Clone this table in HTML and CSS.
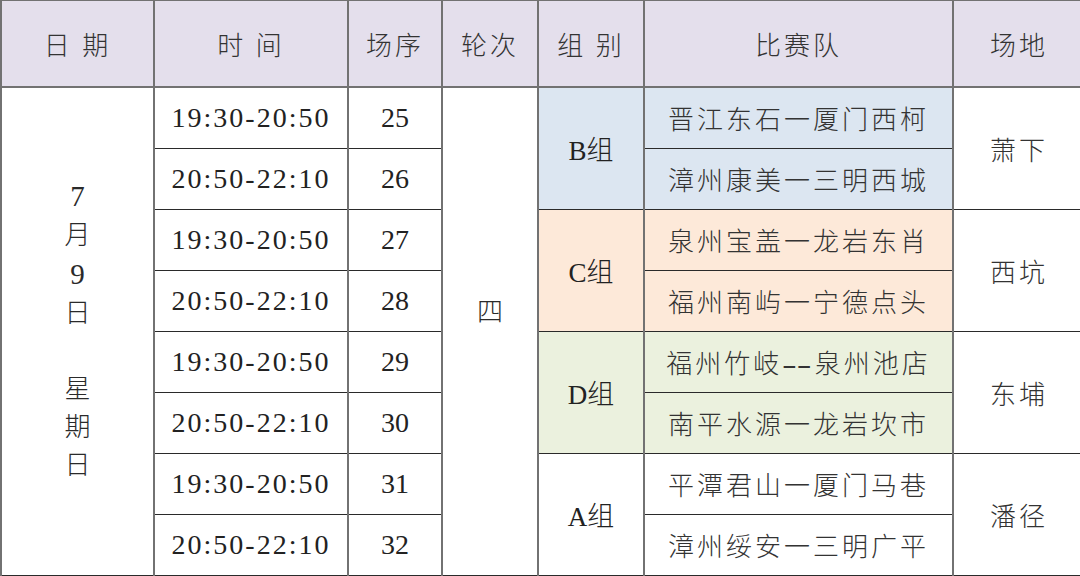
FILE: index.html
```html
<!DOCTYPE html>
<html lang="zh">
<head>
<meta charset="utf-8">
<title>赛程表</title>
<link rel="stylesheet" href="styles.css">
</head>
<body>
<table class="sched">
  <colgroup>
    <col class="c-date"><col class="c-time"><col class="c-seq"><col class="c-round"><col class="c-grp"><col class="c-team"><col class="c-venue">
  </colgroup>
  <thead>
    <tr class="head">
      <th>日 期</th><th>时 间</th><th>场序</th><th>轮次</th><th>组 别</th><th>比赛队</th><th>场地</th>
    </tr>
  </thead>
  <tbody>
    <tr>
      <td class="date" rowspan="8"><span class="dn">7</span><br>月<br><span class="dn">9</span><br>日<br><br>星<br>期<br>日</td>
      <td class="time">19:30-20:50</td>
      <td class="num">25</td>
      <td class="round" rowspan="8">四</td>
      <td class="grp b" rowspan="2">B组</td>
      <td class="team b">晋江东石一厦门西柯</td>
      <td class="venue" rowspan="2">萧下</td>
    </tr>
    <tr>
      <td class="time">20:50-22:10</td>
      <td class="num">26</td>
      <td class="team b">漳州康美一三明西城</td>
    </tr>
    <tr>
      <td class="time">19:30-20:50</td>
      <td class="num">27</td>
      <td class="grp c" rowspan="2">C组</td>
      <td class="team c">泉州宝盖一龙岩东肖</td>
      <td class="venue" rowspan="2">西坑</td>
    </tr>
    <tr>
      <td class="time">20:50-22:10</td>
      <td class="num">28</td>
      <td class="team c">福州南屿一宁德点头</td>
    </tr>
    <tr>
      <td class="time">19:30-20:50</td>
      <td class="num">29</td>
      <td class="grp d" rowspan="2">D组</td>
      <td class="team d">福州竹岐<span class="dash">--</span>泉州池店</td>
      <td class="venue" rowspan="2">东埔</td>
    </tr>
    <tr>
      <td class="time">20:50-22:10</td>
      <td class="num">30</td>
      <td class="team d">南平水源一龙岩坎市</td>
    </tr>
    <tr>
      <td class="time">19:30-20:50</td>
      <td class="num">31</td>
      <td class="grp" rowspan="2">A组</td>
      <td class="team">平潭君山一厦门马巷</td>
      <td class="venue" rowspan="2">潘径</td>
    </tr>
    <tr>
      <td class="time">20:50-22:10</td>
      <td class="num">32</td>
      <td class="team">漳州绥安一三明广平</td>
    </tr>
  </tbody>
</table>
</body>
</html>
```
FILE: styles.css
```css
html, body {
  margin: 0;
  padding: 0;
  background: #ffffff;
  overflow: hidden;
}
body {
  width: 1080px;
  height: 576px;
}
.sched {
  border-collapse: collapse;
  table-layout: fixed;
  width: 1084px;
  margin-top: -1px;
  font-family: "Liberation Serif", "Noto Sans CJK SC", serif;
  color: #222222;
  font-size: 26px;
  font-weight: 300;
}
.c-date { width: 153px; }
.c-time { width: 194px; }
.c-seq { width: 94px; }
.c-round { width: 96px; }
.c-grp { width: 106px; }
.c-team { width: 309px; }
.c-venue { width: 132px; }

.sched th,
.sched td {
  padding: 0;
  text-align: center;
  vertical-align: middle;
  border-top: 1px solid #2a2a2a;
  border-bottom: 1px solid #2a2a2a;
  border-left: 2px solid #727272;
  border-right: 2px solid #727272;
  font-weight: 300;
}
.head {
  height: 87px;
}
.sched th {
  background: #e4dfec;
  border-top: 2px solid #727272;
  border-bottom: 2px solid #727272;
  letter-spacing: 3px;
  color: #333333;
}
.sched tbody tr {
  height: 61px;
}
.date {
  line-height: 38px;
  font-size: 26px;
  color: #2a2a2a;
}
.dn {
  font-size: 29px;
}
.time {
  font-size: 28px;
  letter-spacing: 2px;
}
.num {
  font-size: 28px;
}
.round {
  padding-bottom: 44px !important;
  color: #2a2a2a;
}
.grp {
  font-size: 27px;
}
.team {
  letter-spacing: 3px;
  color: #333333;
}
.dash {
  display: inline-block;
  letter-spacing: 0;
  transform: scaleX(1.7);
  margin: 0 9px 0 6px;
}
.venue {
  letter-spacing: 3px;
  color: #333333;
}
.b { background: #dce6f1; }
.c { background: #fde9d9; }
.d { background: #ebf1de; }
```
